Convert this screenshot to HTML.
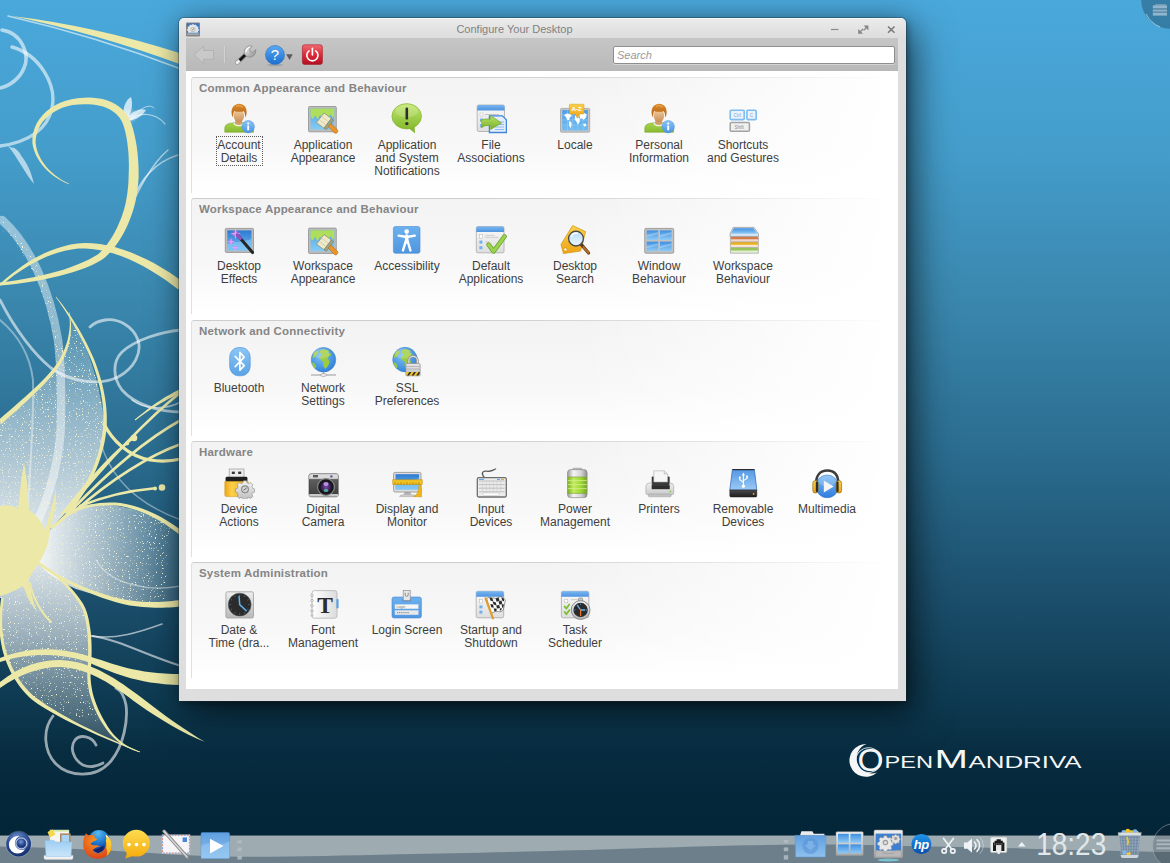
<!DOCTYPE html>
<html><head><meta charset="utf-8"><title>Configure Your Desktop</title>
<style>
html,body{margin:0;padding:0}
body{width:1170px;height:863px;overflow:hidden;position:relative;font-family:"Liberation Sans",sans-serif;font-size:11px;color:#3a3a3a;
background:linear-gradient(180deg,#4aa8db 0px,#449dcb 150px,#3a87ae 300px,#2b6d90 450px,#1b4e6b 600px,#0e3a51 700px,#072b3f 760px,#04273a 800px,#042437 863px)}
#wall{position:absolute;left:0;top:0;width:1170px;height:863px}
#win{position:absolute;left:179px;top:18px;width:727px;height:683px;background:linear-gradient(180deg,#fafafa 0,#eaeaea 1.500px,#dddddd 20px,#dedede 24px,#dedede 100%);border-radius:5px 5px 0 0;box-shadow:0 0 0 1px rgba(30,50,60,.35),2px 3px 6px rgba(0,0,0,.3),0 2px 24px rgba(0,0,0,.2),9px 12px 38px rgba(0,0,0,.55)}
#title{position:absolute;left:0;top:4px;width:671px;text-align:center;line-height:14px;color:#828282;font-size:11px}
#tb{position:absolute;left:7px;top:20px;width:712px;height:33.500px;background:linear-gradient(180deg,#c6c6c6,#b8b8b8)}
#search{position:absolute;left:434px;top:28px;width:280px;height:16px;background:#fff;border:1px solid #8e8e8e;border-radius:2px;box-shadow:0 1px 0 #d4d4d4}
#search span{position:absolute;left:3px;top:1px;font-style:italic;color:#9a9a9a;font-size:11px;line-height:14px}
#content{position:absolute;left:7px;top:53px;width:712px;height:618px;background:#fff}
.grp{position:absolute;left:5px;width:702px;height:116px;border-radius:3px 0 0 0;
background:linear-gradient(90deg,rgba(255,255,255,0) 55%,#fff 100%),linear-gradient(180deg,#f3f3f3 0,#f8f8f8 60%,#fff 100%)}
.grp:before{content:"";position:absolute;left:0;top:0;right:0;bottom:0;border-top:1px solid #cdcdcd;border-left:1px solid #e0e0e0;border-radius:3px 0 0 0;
-webkit-mask-image:linear-gradient(90deg,#000 40%,transparent 100%)}
.grp h3{position:absolute;left:8px;top:4px;margin:0;font-size:11.5px;letter-spacing:.2px;line-height:14px;font-weight:bold;color:#858585;white-space:nowrap}
.it{position:absolute;top:26px;width:84px;text-align:center;line-height:13px;font-size:12px;letter-spacing:0;color:#3e3e3e;white-space:nowrap}
.it i{font-style:normal;display:block;width:32px;height:32px;margin:0 auto 4px}
.foc{position:absolute;left:18.5px;top:33px;width:47px;height:29.500px;border:1px dotted #5a5a5a;box-sizing:border-box}
#panel{position:absolute;left:0;top:835px;width:1170px;height:28px;background:linear-gradient(180deg,#97a8b0 0,#93a4ad 12px,#6f838e 14px,#6d808b 100%)}
</style></head><body>
<svg id="wall" viewBox="0 0 1170 863">
<defs>
<linearGradient id="gSail" x1="0" y1="0" x2="0" y2="1"><stop offset="0" stop-color="#fff" stop-opacity=".1"/><stop offset=".45" stop-color="#fff" stop-opacity=".48"/><stop offset="1" stop-color="#fff" stop-opacity=".9"/></linearGradient>
<linearGradient id="gPet2" x1="0" y1="0" x2="1" y2="0"><stop offset="0" stop-color="#fff" stop-opacity=".95"/><stop offset=".45" stop-color="#fff" stop-opacity=".6"/><stop offset="1" stop-color="#fff" stop-opacity=".1"/></linearGradient>
<linearGradient id="gPet3" x1="0" y1="0" x2="0" y2="1"><stop offset="0" stop-color="#fff" stop-opacity=".85"/><stop offset=".6" stop-color="#fff" stop-opacity=".42"/><stop offset="1" stop-color="#fff" stop-opacity=".12"/></linearGradient>
<radialGradient id="gGlow" cx=".5" cy=".5" r=".5"><stop offset="0" stop-color="#fff" stop-opacity=".55"/><stop offset="1" stop-color="#fff" stop-opacity="0"/></radialGradient>
<filter id="spk" x="0" y="0" width="100%" height="100%" filterUnits="objectBoundingBox"><feTurbulence type="fractalNoise" baseFrequency="0.85" numOctaves="1" seed="7" result="n"/><feColorMatrix in="n" type="matrix" values="0 0 0 0 0.925  0 0 0 0 0.914  0 0 0 0 0.66  0 0 0 11 -7.1" result="d"/><feComposite in="d" in2="SourceGraphic" operator="in"/></filter>
</defs>
<g fill="none" stroke="#fff" stroke-opacity=".58" stroke-linecap="round">
<path d="M8,16 Q95,36 181,69" stroke-width="1.6"/>
<path d="M2,30 C22,33 30,55 24,68 C20,78 10,86 0,88" stroke-width="3.6"/>
<path d="M12,47 C40,55 57,85 52,108 C48,128 30,142 0,146" stroke-width="3.4"/>
<path d="M2,220 C30,245 50,290 58,340 C62,370 61,400 61,420 C61,450 52,490 38,520" stroke-width="8.5" stroke-opacity=".45"/>
<path d="M0,300 C15,330 35,355 51,368 C70,382 100,386 118,377 C135,368 142,352 138,340 C133,326 118,318 105,320 C98,321 93,324 90,327" stroke-width="2.8"/>
<path d="M181,330 C160,332 135,340 122,352 C112,362 113,378 122,390 C135,405 160,412 181,412" stroke-width="2.8"/>
<path d="M0,320 C18,335 30,355 33,380 C34,420 30,470 28,505" stroke-width="2" stroke-opacity=".4"/>
<path d="M133,200 C140,180 155,162 178,155" stroke-width="1.6"/>
<path d="M122,228 C135,195 150,165 168,150" stroke-width="1.6"/>
<path d="M130,120 C140,112 155,112 165,124" stroke-width="1.2"/>
<path d="M132,118 C142,106 150,104 154,108" stroke-width="1"/>
<path d="M92,636 C115,640 140,632 162,624" stroke-width="1.6"/>
<path d="M92,636 C120,640 145,655 181,666" stroke-width="2.2"/>
<path d="M53,716 C42,730 44,752 56,764 C68,776 95,780 111,761 C124,745 128,720 126,705 C124,695 120,690 116,688" stroke-width="2.8"/>
<path d="M96,745 C92,736 80,734 75,740 C69,748 74,760 83,765 C90,768 98,766 103,763" stroke-width="2.8"/>
<path d="M132,400 C145,410 165,410 181,402" stroke-width="1.5"/>
<path d="M96,560 C110,585 150,592 181,586" stroke-width="1.4" stroke-opacity=".45"/>
<path d="M100,440 C110,480 140,505 181,520" stroke-width="1.4" stroke-opacity=".4"/>
</g>
<path d="M8,146 C20,150 30,165 34,184 C24,172 18,158 8,146Z M12,147 C20,150 24,158 22,167 C20,158 17,152 12,147Z" fill="#fff" fill-opacity=".6"/>
<path d="M124,116 C122,108 126,100 131,97 C133,104 132,110 129,116 C134,110 141,108 146,110 C142,117 134,121 126,121Z" fill="#fff" fill-opacity=".7"/>
<circle cx="129" cy="116" r="9" fill="url(#gGlow)"/>
<path d="M0,422 C25,400 48,380 58,365 C68,350 73,330 69,312 C85,340 100,380 105,426 C103,450 95,475 76,502 L51,528 L20,545 L0,520Z" fill="url(#gSail)"/>
<path d="M50,530 C60,518 70,509 80,506 C110,500 150,510 181,533 L181,604 C150,606 110,600 76,589 C60,582 45,572 38,563Z" fill="url(#gPet2)"/>
<path d="M0,598 L2,560 L33,560 C50,568 75,590 84,609 C90,625 91,650 89,672 C88,690 95,712 110,732 C120,744 130,749 140,752 C105,740 65,722 33,698 C15,683 5,660 2,640 C0,625 0,610 2,598Z" fill="url(#gPet3)"/>
<g filter="url(#spk)" fill="#000">
<path d="M0,422 C25,400 48,380 58,365 C68,350 73,330 69,312 C85,340 100,380 105,426 C103,450 95,475 76,502 L51,528 L20,545 L0,520Z"/>
<path d="M50,530 C60,518 70,509 80,506 C110,500 150,510 170,526 L165,600 C150,606 110,600 76,589 C60,582 45,572 38,563Z"/>
<path d="M0,598 L2,560 L33,560 C50,568 75,590 84,609 C90,625 91,650 89,672 C88,690 95,712 100,722 C85,720 65,712 33,698 C15,683 5,660 2,640 C0,625 0,610 2,598Z"/>
<path d="M-2,216 C30,242 54,290 62,340 C66,370 65,400 65,420 L57,420 C57,400 58,370 54,340 C46,292 26,250 -2,226Z"/>
</g>
<g fill="none" stroke="#ece9a8" stroke-linecap="round" stroke-linejoin="round">
<path d="M66,512 C100,470 140,425 181,392" stroke-width="2.6"/>
<path d="M70,512 C105,475 145,440 181,420" stroke-width="2.6"/>
<path d="M62,514 C85,485 110,455 132,439" stroke-width="2.2"/>
<path d="M74,512 C110,480 150,455 181,444" stroke-width="2.8"/>
<path d="M104,424 C112,440 128,456 150,460 C162,462 172,461 181,459" stroke-width="3.2"/>
<path d="M80,506 C100,498 125,491 153,488.5" stroke-width="2.6"/>
<path d="M30,583 C32,595 40,612 51,622" stroke-width="2"/>
</g>
<g fill="#ece9a8">
<path d="M69.1,183.7 L65.2,181.8 L61.4,179.7 L57.9,177.3 L54.5,174.8 L51.4,172.1 L48.5,169.2 L45.9,166.2 L43.5,163.1 L41.4,159.9 L39.6,156.6 L38.1,153.2 L36.9,149.8 L36.1,146.3 L35.6,142.9 L35.8,138.3 L36.7,133.9 L38.2,129.6 L40.2,125.6 L42.7,121.8 L45.8,118.4 L49.3,115.2 L53.2,112.4 L57.6,109.9 L62.3,107.8 L67.3,106.2 L72.6,105.1 L78.2,104.4 L84.1,104.3 L88.4,104.2 L92.4,104.5 L96.1,105.0 L99.7,105.7 L103.0,106.6 L106.1,107.7 L109.0,109.0 L111.6,110.5 L114.0,112.2 L116.2,114.0 L118.1,116.0 L119.8,118.1 L121.2,120.3 L122.4,122.6 L123.8,126.6 L125.1,131.1 L126.2,136.1 L127.1,141.3 L127.8,146.9 L128.4,152.6 L128.7,158.5 L128.9,164.5 L128.8,170.6 L128.6,176.5 L128.4,182.4 L127.9,188.2 L127.3,193.8 L126.4,199.1 L125.4,204.2 L124.1,209.3 L122.5,214.2 L120.8,219.0 L118.8,223.7 L116.8,228.2 L114.6,232.5 L112.3,236.5 L109.9,240.3 L107.5,243.8 L105.1,247.0 L102.7,249.8 L100.3,252.2 L98.1,254.2 L93.8,256.8 L88.9,259.5 L83.4,262.1 L77.4,264.6 L71.0,267.1 L64.1,269.4 L56.9,271.5 L49.3,273.6 L41.5,275.4 L33.4,277.2 L25.2,278.8 L16.8,280.2 L8.4,281.4 L-0.2,282.5 L0.2,285.5 L8.8,284.7 L17.3,283.7 L25.8,282.5 L34.2,281.2 L42.4,279.7 L50.4,278.0 L58.1,276.2 L65.6,274.3 L72.7,272.2 L79.4,270.0 L85.8,267.7 L91.6,265.2 L97.0,262.6 L101.9,259.8 L104.9,257.5 L107.8,254.8 L110.7,251.8 L113.5,248.4 L116.3,244.8 L119.1,240.8 L121.7,236.5 L124.2,232.0 L126.6,227.2 L128.8,222.3 L130.8,217.1 L132.6,211.9 L134.2,206.4 L135.6,200.9 L136.6,195.2 L137.5,189.3 L138.2,183.2 L138.6,176.9 L138.6,170.6 L138.4,164.3 L138.0,158.0 L137.4,151.8 L136.6,145.7 L135.6,139.9 L134.4,134.3 L133.1,129.0 L131.5,124.0 L129.6,119.4 L128.0,116.3 L126.0,113.4 L123.8,110.8 L121.3,108.4 L118.5,106.2 L115.5,104.2 L112.2,102.5 L108.8,101.0 L105.1,99.8 L101.2,98.8 L97.1,98.2 L92.9,97.7 L88.4,97.6 L83.9,97.7 L77.6,98.2 L71.5,99.2 L65.7,100.7 L60.2,102.8 L55.1,105.3 L50.4,108.2 L46.2,111.6 L42.5,115.3 L39.3,119.3 L36.6,123.6 L34.6,128.2 L33.2,133.0 L32.4,138.0 L32.4,143.1 L33.1,147.0 L34.2,150.6 L35.6,154.2 L37.4,157.7 L39.4,161.1 L41.8,164.4 L44.4,167.5 L47.2,170.5 L50.3,173.3 L53.7,175.9 L57.2,178.3 L60.9,180.5 L64.8,182.5 L68.9,184.3Z"/>
<path d="M0.6,285.8 L5.1,282.2 L9.6,278.7 L14.4,275.1 L19.3,271.7 L24.3,268.4 L29.6,265.2 L35.0,262.2 L40.6,259.4 L46.4,256.8 L52.4,254.5 L58.5,252.5 L64.9,250.8 L71.5,249.5 L78.3,248.6 L85.0,248.4 L91.9,248.9 L99.0,249.9 L106.3,251.5 L113.7,253.5 L121.1,256.1 L128.5,259.1 L136.0,262.5 L143.4,266.3 L150.7,270.5 L157.9,274.9 L164.9,279.6 L171.7,284.5 L178.3,289.6 L183.7,282.4 L176.8,277.4 L169.6,272.6 L162.1,268.0 L154.6,263.6 L146.9,259.6 L139.1,255.9 L131.2,252.6 L123.3,249.7 L115.5,247.3 L107.7,245.4 L100.0,244.0 L92.4,243.2 L85.0,242.9 L77.7,243.4 L70.6,244.6 L63.8,246.2 L57.2,248.2 L50.9,250.5 L44.8,253.1 L38.9,256.0 L33.3,259.1 L27.8,262.3 L22.6,265.8 L17.6,269.4 L12.8,273.0 L8.1,276.7 L3.7,280.5 L-0.6,284.2Z"/>
<path d="M55.8,297.2 L58.7,301.2 L61.6,305.4 L64.5,309.8 L67.4,314.4 L70.3,319.0 L73.1,323.8 L75.8,328.7 L78.6,333.7 L81.2,338.6 L83.8,343.6 L86.2,348.6 L88.5,353.6 L90.7,358.6 L92.7,363.5 L94.3,368.2 L95.8,372.8 L97.1,377.3 L98.4,381.8 L99.5,386.3 L100.5,390.7 L101.3,395.2 L102.0,399.6 L102.6,403.9 L103.0,408.3 L103.3,412.7 L103.4,417.1 L103.4,421.5 L103.3,425.9 L102.7,431.0 L102.0,436.1 L101.1,441.2 L100.0,446.4 L98.6,451.7 L97.1,457.0 L95.2,462.3 L93.2,467.7 L90.8,473.1 L88.2,478.6 L85.3,484.1 L82.1,489.7 L78.5,495.4 L74.7,501.1 L73.0,503.8 L71.3,506.3 L69.6,508.6 L67.9,510.8 L66.2,512.8 L64.5,514.7 L62.8,516.5 L61.0,518.2 L59.3,519.8 L57.5,521.3 L55.7,522.8 L53.9,524.1 L52.1,525.5 L50.2,526.8 L51.8,529.2 L53.8,527.9 L55.7,526.6 L57.6,525.2 L59.5,523.7 L61.3,522.1 L63.2,520.5 L65.0,518.7 L66.8,516.9 L68.6,514.9 L70.3,512.8 L72.1,510.5 L73.9,508.1 L75.6,505.6 L77.3,502.9 L81.3,497.1 L84.9,491.4 L88.2,485.7 L91.2,480.1 L93.9,474.5 L96.3,469.0 L98.5,463.5 L100.4,458.0 L102.0,452.6 L103.4,447.3 L104.6,441.9 L105.5,436.6 L106.2,431.4 L106.7,426.1 L106.8,421.5 L106.8,417.0 L106.6,412.5 L106.3,408.0 L105.8,403.6 L105.2,399.1 L104.4,394.6 L103.5,390.1 L102.5,385.6 L101.3,381.0 L100.0,376.5 L98.6,371.9 L97.0,367.2 L95.3,362.5 L93.3,357.5 L91.0,352.5 L88.7,347.4 L86.2,342.4 L83.5,337.4 L80.8,332.4 L77.9,327.5 L74.9,322.7 L71.8,318.1 L68.7,313.5 L65.6,309.1 L62.5,304.8 L59.3,300.7 L56.2,296.8Z"/>
<path d="M68.8,312.0 L69.4,315.9 L69.7,319.9 L69.8,323.8 L69.6,327.7 L69.2,331.6 L68.5,335.5 L67.7,339.4 L66.6,343.2 L65.3,346.9 L63.9,350.5 L62.3,354.1 L60.6,357.6 L58.7,360.9 L56.6,364.1 L54.3,367.3 L51.6,370.6 L48.6,374.1 L45.2,377.8 L41.5,381.5 L37.5,385.4 L33.2,389.4 L28.8,393.5 L24.1,397.7 L19.2,402.1 L14.2,406.5 L9.0,410.9 L3.7,415.5 L-1.7,420.1 L1.7,423.9 L6.9,419.1 L12.1,414.5 L17.2,409.9 L22.2,405.3 L27.0,400.9 L31.6,396.6 L36.0,392.3 L40.2,388.2 L44.2,384.2 L47.8,380.3 L51.2,376.5 L54.3,372.8 L57.0,369.3 L59.4,365.9 L61.5,362.5 L63.4,359.0 L65.1,355.4 L66.6,351.6 L67.9,347.8 L69.0,343.8 L69.8,339.9 L70.5,335.8 L70.9,331.8 L71.0,327.8 L71.0,323.8 L70.7,319.8 L70.1,315.8 L69.2,312.0Z"/>
<path d="M60.7,522.7 L63.0,520.2 L65.6,518.0 L68.4,515.9 L71.5,514.0 L74.8,512.2 L78.4,510.6 L82.3,509.3 L86.3,508.1 L90.6,507.1 L95.1,506.3 L99.8,505.8 L104.7,505.4 L109.7,505.3 L114.9,505.4 L120.1,506.1 L125.4,507.1 L130.6,508.4 L135.7,509.9 L140.8,511.8 L145.7,513.8 L150.6,516.1 L155.3,518.5 L159.9,521.0 L164.2,523.6 L168.4,526.4 L172.4,529.2 L176.1,532.0 L179.6,534.8 L182.4,531.2 L178.8,528.5 L174.9,525.7 L170.7,522.9 L166.4,520.2 L161.8,517.6 L157.1,515.1 L152.2,512.7 L147.1,510.5 L142.0,508.5 L136.7,506.8 L131.4,505.3 L126.0,504.0 L120.6,503.1 L115.1,502.6 L109.7,502.5 L104.5,502.7 L99.5,503.1 L94.7,503.7 L90.1,504.6 L85.7,505.7 L81.5,507.0 L77.5,508.5 L73.8,510.2 L70.3,512.1 L67.1,514.1 L64.2,516.4 L61.6,518.8 L59.3,521.3Z"/>
<path d="M37.4,563.8 L42.4,567.5 L47.8,571.3 L53.7,575.0 L60.0,578.7 L66.5,582.3 L73.3,585.7 L80.3,589.0 L87.5,592.1 L94.7,595.0 L101.9,597.7 L109.0,600.1 L116.1,602.2 L122.9,604.0 L129.6,605.4 L134.0,606.0 L138.3,606.6 L142.6,607.0 L146.8,607.3 L150.9,607.6 L155.0,607.7 L158.9,607.8 L162.7,607.7 L166.3,607.6 L169.8,607.5 L173.1,607.2 L176.1,606.9 L179.0,606.6 L181.5,606.2 L180.5,599.8 L178.0,600.2 L175.4,600.6 L172.5,601.0 L169.3,601.3 L166.0,601.6 L162.5,601.8 L158.8,602.0 L155.0,602.1 L151.1,602.1 L147.1,602.0 L143.0,601.8 L138.8,601.5 L134.6,601.1 L130.4,600.6 L123.9,599.5 L117.2,598.0 L110.2,596.2 L103.1,594.0 L96.0,591.6 L88.8,588.9 L81.7,586.0 L74.7,582.9 L67.8,579.7 L61.3,576.3 L55.0,572.8 L49.1,569.3 L43.6,565.8 L38.6,562.2Z"/>
<path d="M32.5,560.9 L36.3,562.8 L40.1,565.1 L44.2,567.8 L48.3,570.8 L52.4,574.1 L56.6,577.6 L60.6,581.3 L64.6,585.2 L68.3,589.2 L71.8,593.3 L75.1,597.4 L78.0,601.6 L80.5,605.7 L82.6,609.6 L83.7,613.0 L84.7,616.8 L85.6,620.7 L86.3,624.9 L86.9,629.3 L87.4,633.8 L87.8,638.4 L88.0,643.1 L88.2,647.9 L88.2,652.7 L88.2,657.5 L88.0,662.3 L87.7,667.1 L87.4,671.9 L87.3,675.9 L87.4,680.1 L87.9,684.3 L88.5,688.6 L89.4,692.9 L90.6,697.3 L92.0,701.8 L93.7,706.2 L95.6,710.7 L97.7,715.2 L100.1,719.7 L102.8,724.1 L105.8,728.5 L109.0,732.8 L111.3,735.2 L113.5,737.5 L115.8,739.5 L118.0,741.4 L120.2,743.1 L122.4,744.6 L124.6,746.0 L126.8,747.2 L129.0,748.3 L131.2,749.3 L133.4,750.2 L135.6,751.0 L137.7,751.7 L139.9,752.3 L140.1,751.7 L138.0,751.0 L135.9,750.2 L133.8,749.3 L131.6,748.3 L129.6,747.3 L127.5,746.1 L125.4,744.8 L123.3,743.3 L121.2,741.7 L119.2,740.0 L117.1,738.1 L115.0,736.0 L113.0,733.7 L111.0,731.2 L108.0,726.9 L105.3,722.5 L102.8,718.2 L100.5,713.8 L98.4,709.4 L96.6,705.1 L95.0,700.7 L93.6,696.4 L92.5,692.2 L91.7,688.0 L91.1,683.9 L90.7,679.8 L90.5,675.9 L90.6,672.1 L91.0,667.4 L91.3,662.5 L91.5,657.6 L91.6,652.7 L91.6,647.8 L91.5,642.9 L91.2,638.1 L90.9,633.4 L90.3,628.8 L89.6,624.4 L88.8,620.1 L87.9,616.0 L86.7,612.1 L85.4,608.4 L83.2,604.1 L80.5,599.9 L77.4,595.7 L74.0,591.5 L70.3,587.3 L66.4,583.3 L62.4,579.4 L58.2,575.7 L53.9,572.2 L49.7,569.0 L45.4,566.0 L41.3,563.3 L37.3,561.0 L33.5,559.1Z"/>
<path d="M1.3,597.8 L0.7,601.5 L0.3,605.0 L-0.1,608.6 L-0.4,612.0 L-0.6,615.5 L-0.7,618.9 L-0.7,622.3 L-0.7,625.6 L-0.5,628.9 L-0.3,632.2 L-0.0,635.5 L0.4,638.8 L0.9,642.0 L1.5,645.3 L2.4,649.7 L3.6,654.0 L5.0,658.3 L6.5,662.6 L8.3,666.8 L10.2,670.9 L12.3,675.0 L14.6,678.9 L17.1,682.7 L19.7,686.4 L22.5,690.0 L25.4,693.3 L28.5,696.5 L31.8,699.5 L37.9,703.9 L44.3,708.0 L51.1,712.1 L58.2,716.1 L65.6,720.0 L73.2,723.8 L81.1,727.6 L89.1,731.3 L97.3,735.0 L105.7,738.6 L114.1,742.1 L122.7,745.6 L131.3,748.9 L139.9,752.3 L140.1,751.7 L131.6,748.1 L123.1,744.5 L114.7,740.8 L106.4,737.0 L98.1,733.2 L90.1,729.3 L82.2,725.4 L74.5,721.4 L67.0,717.3 L59.8,713.2 L52.9,709.1 L46.3,704.9 L40.1,700.6 L34.2,696.5 L31.2,693.7 L28.2,690.7 L25.4,687.5 L22.7,684.2 L20.1,680.7 L17.7,677.0 L15.4,673.3 L13.3,669.4 L11.4,665.4 L9.6,661.4 L8.1,657.2 L6.7,653.1 L5.5,648.9 L4.5,644.7 L3.9,641.5 L3.4,638.4 L3.0,635.2 L2.6,632.0 L2.4,628.7 L2.2,625.5 L2.1,622.2 L2.1,618.9 L2.2,615.6 L2.3,612.2 L2.6,608.8 L2.9,605.3 L3.3,601.8 L3.7,598.2Z"/>
<path d="M135.3,420.4 L138.6,417.9 L141.9,415.6 L145.1,413.2 L148.4,411.0 L151.7,408.8 L155.0,406.7 L158.3,404.7 L161.6,402.7 L164.9,400.9 L168.3,399.1 L171.6,397.4 L175.0,395.8 L178.4,394.3 L181.8,392.8 L180.2,389.2 L176.8,390.8 L173.4,392.6 L170.1,394.4 L166.7,396.3 L163.4,398.3 L160.2,400.4 L156.9,402.6 L153.7,404.8 L150.5,407.1 L147.3,409.5 L144.2,411.9 L141.0,414.4 L137.8,417.0 L134.7,419.6Z"/>
<path d="M12,16 Q95,26 181,53.500 L181,64.500 Q95,33 12,16Z"/>
<path d="M0,682 C20,666 40,660 60,660 C92,661 118,680 142,698 C165,716 185,730 205,742 C183,733 162,721 138,704 C114,686 90,668 60,667 C40,667 20,674 0,688Z"/>
<path d="M0,658 C25,648 55,646 85,655 C115,664 135,674 181,674 L181,685 C135,684 112,672 85,661 C55,652 25,654 0,662Z"/>
<path d="M0,506 C8,504 14,506 18,509 L21,482 L24,462 L27,482 L29,510 C36,514 42,522 45,531 L52,506 L56,488 L55.500,507 L49,536 C48,546 44,556 38,564 C34,570 30,576 28,581 L32,596 L36,611 L29,600 L23,586 C16,590 8,594 0,596Z"/>
<circle cx="134" cy="438" r="3.3"/><circle cx="127" cy="443.500" r="2.100"/>
<circle cx="162" cy="487.500" r="3.300"/><circle cx="155" cy="488.500" r="2.100"/>
</g>
</svg>
<svg width="0" height="0" style="position:absolute"><defs>
<linearGradient id="gGreen" x1="0" y1="0" x2="0" y2="1"><stop offset="0" stop-color="#a8d44c"/><stop offset="1" stop-color="#88ba30"/></linearGradient>
<linearGradient id="gInfo" x1="0" y1="0" x2="0" y2="1"><stop offset="0" stop-color="#8cc6f6"/><stop offset="1" stop-color="#4a92e6"/></linearGradient>
<linearGradient id="gGreen2" x1="0" y1="0" x2="0" y2="1"><stop offset="0" stop-color="#b8e468"/><stop offset="1" stop-color="#78b028"/></linearGradient>
<linearGradient id="gSkin" x1="0" y1="0" x2="0" y2="1"><stop offset="0" stop-color="#f4d0a0"/><stop offset="1" stop-color="#c98f58"/></linearGradient>
<linearGradient id="gHair" x1="0" y1="0" x2="0" y2="1"><stop offset="0" stop-color="#dc8c2c"/><stop offset="1" stop-color="#b05e16"/></linearGradient>
<linearGradient id="gBlueB" x1="0" y1="0" x2="0" y2="1"><stop offset="0" stop-color="#7dbdf4"/><stop offset="1" stop-color="#2f7be0"/></linearGradient>
<linearGradient id="gSky" x1="0" y1="0" x2="0" y2="1"><stop offset="0" stop-color="#4aa4e6"/><stop offset="1" stop-color="#86ccf4"/></linearGradient>
<linearGradient id="gSky2" x1="0" y1="0" x2="0" y2="1"><stop offset="0" stop-color="#4c9fe8"/><stop offset="1" stop-color="#74bdf2"/></linearGradient>
<linearGradient id="gFx" x1="0" y1="0" x2="0" y2="1"><stop offset="0" stop-color="#2f7ad2"/><stop offset="1" stop-color="#6cbcf2"/></linearGradient>
<linearGradient id="gAcc" x1="0" y1="0" x2="0" y2="1"><stop offset="0" stop-color="#6cb0ee"/><stop offset="1" stop-color="#4f96e0"/></linearGradient>
<linearGradient id="gBt" x1="0" y1="0" x2="0" y2="1"><stop offset="0" stop-color="#8cc6f4"/><stop offset="1" stop-color="#5aa2e6"/></linearGradient>
<linearGradient id="gPane" x1="0" y1="0" x2="0" y2="1"><stop offset="0" stop-color="#3f90e2"/><stop offset="1" stop-color="#8fcaf4"/></linearGradient>
<linearGradient id="gBubble" x1="0" y1="0" x2="0" y2="1"><stop offset="0" stop-color="#bfe66a"/><stop offset="1" stop-color="#86ba30"/></linearGradient>
<linearGradient id="gTitle" x1="0" y1="0" x2="0" y2="1"><stop offset="0" stop-color="#78b6f0"/><stop offset="1" stop-color="#4e94e0"/></linearGradient>
<linearGradient id="gWinBody" x1="0" y1="0" x2="0" y2="1"><stop offset="0" stop-color="#fafafa"/><stop offset="1" stop-color="#dedede"/></linearGradient>
<linearGradient id="gTag" x1="0" y1="0" x2="0" y2="1"><stop offset="0" stop-color="#fad048"/><stop offset="1" stop-color="#eea416"/></linearGradient>
<linearGradient id="gUsbY" x1="0" y1="0" x2="1" y2="0"><stop offset="0" stop-color="#eca818"/><stop offset=".3" stop-color="#fcd048"/><stop offset="1" stop-color="#eeac1a"/></linearGradient>
<linearGradient id="gGlass" x1="0" y1="0" x2="0" y2="1"><stop offset="0" stop-color="#b6dcfa"/><stop offset="1" stop-color="#eef6fd"/></linearGradient>
<linearGradient id="gSilver" x1="0" y1="0" x2="0" y2="1"><stop offset="0" stop-color="#eeeeee"/><stop offset="1" stop-color="#b8b8b8"/></linearGradient>
<linearGradient id="gGear" x1="0" y1="0" x2="0" y2="1"><stop offset="0" stop-color="#f4f4f4"/><stop offset="1" stop-color="#bcbcbc"/></linearGradient>
<linearGradient id="gCam" x1="0" y1="0" x2="0" y2="1"><stop offset="0" stop-color="#6a6a6a"/><stop offset="1" stop-color="#3c3c3c"/></linearGradient>
<radialGradient id="gLens" cx=".5" cy=".5" r=".5"><stop offset="0" stop-color="#7a4ab0"/><stop offset="1" stop-color="#241838"/></radialGradient>
<radialGradient id="gGlobe" cx=".4" cy=".35" r=".7"><stop offset="0" stop-color="#7cc0f4"/><stop offset="1" stop-color="#2f80d6"/></radialGradient>
<linearGradient id="gBatS" x1="0" y1="0" x2="1" y2="0"><stop offset="0" stop-color="#9c9c9c"/><stop offset=".3" stop-color="#f4f4f4"/><stop offset=".7" stop-color="#d4d4d4"/><stop offset="1" stop-color="#8e8e8e"/></linearGradient>
<linearGradient id="gBatG" x1="0" y1="0" x2="1" y2="0"><stop offset="0" stop-color="#7cb424"/><stop offset=".3" stop-color="#c2ec5e"/><stop offset=".7" stop-color="#9cd636"/><stop offset="1" stop-color="#74a820"/></linearGradient>
<linearGradient id="gPrn" x1="0" y1="0" x2="0" y2="1"><stop offset="0" stop-color="#f0f0f0"/><stop offset="1" stop-color="#cacaca"/></linearGradient>
<linearGradient id="gDrive" x1="0" y1="0" x2="0" y2="1"><stop offset="0" stop-color="#5498e6"/><stop offset="1" stop-color="#9acaf4"/></linearGradient>
<linearGradient id="gDark" x1="0" y1="0" x2="0" y2="1"><stop offset="0" stop-color="#4a4a4a"/><stop offset="1" stop-color="#1e1e1e"/></linearGradient>
<linearGradient id="gPaper" x1="0" y1="0" x2="1" y2="0"><stop offset="0" stop-color="#ffffff"/><stop offset="1" stop-color="#dcdcdc"/></linearGradient>
</defs></svg>
<div id="win">
 <div id="title">Configure Your Desktop</div>
 <div id="tb"></div>
 <div id="search"><span>Search</span></div>
<svg id="chrome" width="727" height="60" viewBox="179 18 727 60" style="position:absolute;left:0;top:0">
<defs>
<linearGradient id="cHelp" x1="0" y1="0" x2="0" y2="1"><stop offset="0" stop-color="#5aa9f0"/><stop offset="1" stop-color="#1c6fd0"/></linearGradient>
<linearGradient id="cPow" x1="0" y1="0" x2="0" y2="1"><stop offset="0" stop-color="#f06a70"/><stop offset=".5" stop-color="#dc2c3a"/><stop offset="1" stop-color="#b01224"/></linearGradient>
<linearGradient id="cWr" x1="0" y1="0" x2="1" y2="1"><stop offset="0" stop-color="#f4f4f4"/><stop offset="1" stop-color="#8c8c8c"/></linearGradient>
</defs>
<!-- title icon -->
<rect x="186" y="22.400" width="14" height="14" rx="1" fill="#858585"/>
<rect x="187" y="23.400" width="12" height="10.400" fill="#3b74b8"/>
<rect x="187" y="33.600" width="12" height=".8" fill="#d8d8d8"/>
<path d="M193,23.800 l1.300,1.200 1.800,-.6 .6,1.800 1.800,.5 -.4,1.900 1.200,1.400 -1.300,1.300 .2,1.500 h-10.400 l.2,-1.500 -1.300,-1.300 1.200,-1.400 -.4,-1.900 1.800,-.5 .6,-1.800 1.800,.6z" fill="#e4e4e4"/>
<circle cx="193" cy="29.400" r="2.500" fill="#bdbdbd"/><circle cx="193" cy="29.400" r="1.600" fill="#e8e8e8"/><path d="M192,30.300 l2.200,-1.900" stroke="#7d7d7d" stroke-width=".9"/>
<!-- window buttons -->
<path d="M831,29.5 h7.5" stroke="#8a8a8a" stroke-width="1.2"/>
<path d="M863.600,25.600 h4.800 v4.800z M863,33.800 h-4.800 v-4.800z" fill="#858585"/><path d="M867,27 l-3.400,3.400 M859.600,32.400 l3.400,-3.400" stroke="#858585" stroke-width="1.300" fill="none"/>
<path d="M888,26.5 l6.5,6.3 M894.5,26.5 l-6.5,6.3" stroke="#777" stroke-width="1.5"/>
<!-- back arrow -->
<path d="M194,54.8 L203.5,46 V50.5 H213.5 V59.2 H203.5 V63.6 Z" fill="#c9c9c9" stroke="#b2b2b2" stroke-width="1" stroke-linejoin="round"/>
<path d="M224.5,46 V63" stroke="#d2d2d2" stroke-width="1"/><path d="M225.5,46 V63" stroke="#b4b4b4" stroke-width="1" opacity=".6"/>
<!-- wrench -->
<path d="M237.200,62.600 L246.200,54" stroke="#8c8c8c" stroke-width="4.400" stroke-linecap="round"/>
<path d="M237.200,62.600 L246.200,54" stroke="#e4e4e4" stroke-width="3.200" stroke-linecap="round"/>
<path d="M239.600,60.300 L246,54.200" stroke="#141414" stroke-width="3" stroke-linecap="butt"/>
<circle cx="237.400" cy="62.400" r="1" fill="#fff"/>
<path d="M244.600,54.600 C243.400,51.400 245,47.800 248,46.400 C249.600,45.700 251,45.600 252.200,46 L249.600,49 L250.400,51.800 L253,52.400 L255.600,49.600 C256.300,52.400 255,55.400 252.200,56.600 C250.400,57.400 248.400,57.200 247,56.600Z" fill="url(#cWr)" stroke="#7a7a7a" stroke-width=".6"/>
<path d="M246,51.500 C246.400,49.400 247.600,47.900 249.400,47.200" stroke="#fff" stroke-width="1.200" fill="none" stroke-linecap="round"/>
<!-- help -->
<ellipse cx="275" cy="65" rx="8" ry="1.5" fill="#000" opacity=".12"/>
<circle cx="275" cy="55" r="9.5" fill="url(#cHelp)" stroke="#2a6fc4" stroke-width=".6"/>
<text x="275" y="60.2" font-family="Liberation Sans, sans-serif" font-size="15" fill="#fff" text-anchor="middle">?</text>
<path d="M286.2,54.3 h6.6 l-3.3,5.6z" fill="#5c5c5c"/>
<!-- power -->
<rect x="302.4" y="44.8" width="20" height="19.6" rx="2.2" fill="url(#cPow)" stroke="#a81828" stroke-width=".6"/>
<path d="M309,50.8 A5.6,5.6 0 1 0 315.8,50.8" fill="none" stroke="#fff" stroke-width="1.600" stroke-linecap="round"/>
<path d="M312.4,48.2 V55" stroke="#fff" stroke-width="1.600" stroke-linecap="round"/>
</svg>
 <div id="content">
  <div class="grp" style="top:6px"><h3>Common Appearance and Behaviour</h3>
   <div class="it" style="left:6px"><b class="foc"></b><i><svg width="32" height="32" viewBox="0 0 32 32"><path d="M1.8,29.2 V25.4 C1.8,22.2 4,20.8 8,20.2 L12,19.7 h7.400 L24,20.200 C28.200,20.800 30.600,22.200 30.600,25.400 V29.200Z" fill="url(#gGreen)" stroke="#7aa62c" stroke-width=".6" stroke-linejoin="round"/><path d="M12.300,15.500 h6.800 v4.800 c-1,2.500 -5.800,2.500 -6.800,0z" fill="#d39c66"/><path d="M10.800,20 C12.200,23.600 19.400,23.600 20.600,20" fill="none" stroke="#f2f1e8" stroke-width="1.300"/><ellipse cx="15.900" cy="12.600" rx="5.300" ry="6.600" fill="url(#gSkin)"/><path d="M9.700,14.400 C7.600,10 8,3.400 13,1.400 C18,-.4 23.800,2.400 23.600,9 C23.600,11 23.200,13 22.400,14.400 C22.300,11.600 21.700,9.500 20.700,8.300 C18.400,9 14,9.100 11.400,7.900 C10.400,9.500 9.900,11.800 9.700,14.400Z" fill="url(#gHair)"/><path d="M13,3.400 C15,2.400 18,2.600 19.600,4.400" stroke="#f0b050" stroke-width="1.200" fill="none" opacity=".7"/><circle cx="25.200" cy="23.700" r="6.200" fill="url(#gInfo)" stroke="#4a90de" stroke-width=".5"/><circle cx="25.200" cy="20.600" r="1.050" fill="#fff"/><rect x="24.250" y="22.500" width="1.900" height="4.800" fill="#fff"/></svg></i>Account<br>Details</div>
   <div class="it" style="left:90px"><i><svg width="32" height="32" viewBox="0 0 32 32"><g transform="translate(0,0)"><rect x="1.5" y="3.5" width="27.8" height="25.3" rx="1" fill="#bdbdbd" stroke="#8f8f8f" stroke-width=".8"/><rect x="3.6" y="5.6" width="23.6" height="21" fill="url(#gSky)"/><path d="M3.6,5.6 h23.6 v7.2 c-.8,2.4 -2,2.4 -2.6,0 c-.6,-1.6 -1.6,-1.2 -2.2,.6 c-.8,2.8 -2.2,2.6 -2.8,0 c-.6,-2 -1.8,-1.6 -2.4,.4 c-.8,3.4 -2.4,3.2 -3,0 c-.4,-1.8 -1.6,-1.6 -2.2,.2 c-.8,2.6 -2.2,2.4 -2.8,-.2 c-.6,-1.8 -1.6,-1.4 -2.2,.4 c-.6,2.2 -2.4,2 -3.4,-1.4z" fill="#aede5c"/><path d="M9.5,19.5 L17,10 L24.4,15.4 L17,25.2Z" fill="#efe9cc" stroke="#8f8a60" stroke-width=".7"/><path d="M12.5,17 l6,4.6 M14.8,13.6 l6,4.6" stroke="#cfc79c" stroke-width=".8"/><path d="M17,25.2 L24.4,15.4 L26.4,17.2 L19.4,26.8Z" fill="#a0a684" stroke="#70745a" stroke-width=".5"/><path d="M21.2,23.4 L23.8,20.4 L30.6,27 C31.6,29.4 29,31.2 27.2,29.8Z" fill="#ea952c" stroke="#b26810" stroke-width=".6"/></g></svg></i>Application<br>Appearance</div>
   <div class="it" style="left:174px"><i><svg width="32" height="32" viewBox="0 0 32 32"><path d="M17,24.6 L24,30.4 L23.6,23Z" fill="#86b832"/><ellipse cx="15.7" cy="13.3" rx="14.8" ry="12.7" fill="url(#gBubble)" stroke="#7fae30" stroke-width=".6"/><ellipse cx="15.7" cy="8" rx="11.5" ry="6.5" fill="#fff" opacity=".18"/><rect x="14.5" y="4.6" width="2.6" height="12" rx="1.2" fill="#2e2e2e"/><circle cx="15.8" cy="20.6" r="1.7" fill="#2e2e2e"/></svg></i>Application<br>and System<br>Notifications</div>
   <div class="it" style="left:258px"><i><svg width="32" height="32" viewBox="0 0 32 32"><rect x="2.2" y="2" width="27.3" height="26.5" rx="1.6" fill="url(#gWinBody)" stroke="#a9a9a9" stroke-width=".8"/><path d="M2.2,7.4 v-3.8 a1.6,1.6 0 0 1 1.6,-1.6 h24.1 a1.6,1.6 0 0 1 1.6,1.6 v3.8z" fill="url(#gTitle)"/><rect x="5" y="10" width="3" height="3" fill="#fff" stroke="#bbb" stroke-width=".5"/><rect x="5" y="15.5" width="3" height="3" fill="#7ab4ee"/><rect x="5" y="21" width="3" height="3" fill="#7ab4ee"/><path d="M10,11.5 h14 M10,17 h6" stroke="#c4c4c4" stroke-width="1"/><path d="M14.4,12.9 h13 l4,4 v12.6 h-17z" fill="#e4eefa" stroke="#3f86da" stroke-width="1.3"/><path d="M20,19 h9 M20,21.5 h9 M20,24 h9 M20,26.5 h9" stroke="#8cbcf0" stroke-width="1"/><path d="M5.6,17.4 C9,15.6 12,15.8 15.6,16.2 V12.6 L26.6,20 L15.6,26.4 V22.6 C12,22 9,22.6 6,25 C7.6,22 7.4,20 5.6,17.4Z" fill="url(#gGreen2)" stroke="#6c9c24" stroke-width=".6"/></svg></i>File<br>Associations</div>
   <div class="it" style="left:342px"><i><svg width="32" height="32" viewBox="0 0 32 32"><rect x="1.5" y="5.4" width="29.2" height="23.8" rx="1" fill="#c6c6c6" stroke="#9c9c9c" stroke-width=".7"/><rect x="3.2" y="7.1" width="25.8" height="20.4" fill="url(#gSky2)"/><path d="M3.2,12 h25.8 M3.2,17 h25.8 M3.2,22 h25.8 M8.4,7.1 v20.4 M13.6,7.1 v20.4 M18.8,7.1 v20.4 M24,7.1 v20.4" stroke="#9fd0f6" stroke-width=".5"/><path d="M5,12 l3,-1.6 3.4,.6 1.4,2 -2,1.6 -.6,2.6 -2,-.4 -1,-2.2z M9.8,18 l2.4,1 .4,3.6 -1.4,2.6 -1,-3z M16,13 l2.2,-1.6 1.8,.8 -.6,2.2 1.6,1.4 -.4,3.4 -1.8,2.4 -1.4,-3 -1.8,-2z M20,10.6 l4,-1 3.6,1.6 -.4,3 -2.4,2.6 -2,-1.2 -1.6,.2 -.6,-2.6z M24,21 l2.6,-.6 .8,2 -2,1.4z" fill="#fff"/><path d="M11.4,1.2 h12.6 a1,1 0 0 1 1,1 v7.8 a1,1 0 0 1 -1,1 h-3.4 l-2.2,4.2 -2.2,-4.2 h-4.8 a1,1 0 0 1 -1,-1 v-7.8 a1,1 0 0 1 1,-1z" fill="url(#gTag)" stroke="#d89a10" stroke-width=".5"/><text x="17.7" y="8.2" font-family="Liberation Sans, sans-serif" font-size="6.2" font-weight="bold" fill="#fff" text-anchor="middle">A-Z</text></svg></i>Locale</div>
   <div class="it" style="left:426px"><i><svg width="32" height="32" viewBox="0 0 32 32"><path d="M1.8,29.2 V25.4 C1.8,22.2 4,20.8 8,20.2 L12,19.7 h7.400 L24,20.200 C28.200,20.800 30.600,22.200 30.600,25.400 V29.200Z" fill="url(#gGreen)" stroke="#7aa62c" stroke-width=".6" stroke-linejoin="round"/><path d="M12.300,15.500 h6.800 v4.800 c-1,2.500 -5.800,2.500 -6.800,0z" fill="#d39c66"/><path d="M10.800,20 C12.200,23.600 19.400,23.600 20.600,20" fill="none" stroke="#f2f1e8" stroke-width="1.300"/><ellipse cx="15.900" cy="12.600" rx="5.300" ry="6.600" fill="url(#gSkin)"/><path d="M9.700,14.400 C7.600,10 8,3.400 13,1.400 C18,-.4 23.800,2.400 23.600,9 C23.600,11 23.200,13 22.400,14.400 C22.300,11.600 21.700,9.500 20.700,8.300 C18.400,9 14,9.100 11.400,7.900 C10.400,9.500 9.900,11.800 9.700,14.400Z" fill="url(#gHair)"/><path d="M13,3.400 C15,2.400 18,2.600 19.600,4.400" stroke="#f0b050" stroke-width="1.200" fill="none" opacity=".7"/><circle cx="25.200" cy="23.700" r="6.200" fill="url(#gInfo)" stroke="#4a90de" stroke-width=".5"/><circle cx="25.200" cy="20.600" r="1.050" fill="#fff"/><rect x="24.250" y="22.500" width="1.900" height="4.800" fill="#fff"/></svg></i>Personal<br>Information</div>
   <div class="it" style="left:510px"><i><svg width="32" height="32" viewBox="0 0 32 32"><rect x="3.2" y="7.3" width="14" height="9.3" rx="1" fill="#eef2f6" stroke="#7cbdf2" stroke-width="1.6"/><rect x="19.9" y="7.3" width="9.3" height="9.3" rx="1" fill="#eef2f6" stroke="#7cbdf2" stroke-width="1.6"/><rect x="3.2" y="19.6" width="19.2" height="8.6" rx="1" fill="#f0f0f0" stroke="#a4a4a4" stroke-width="1.5"/><text x="10.2" y="14" font-family="Liberation Sans, sans-serif" font-size="4.6" fill="#6aa8e6" text-anchor="middle">Ctrl</text><text x="24.5" y="14" font-family="Liberation Sans, sans-serif" font-size="4.6" fill="#6aa8e6" text-anchor="middle">C</text><text x="12.2" y="25.8" font-family="Liberation Sans, sans-serif" font-size="4.6" fill="#8a8a8a" text-anchor="middle">Shift</text></svg></i>Shortcuts<br>and Gestures</div>
  </div>
  <div class="grp" style="top:127px"><h3>Workspace Appearance and Behaviour</h3>
   <div class="it" style="left:6px"><i><svg width="32" height="32" viewBox="0 0 32 32"><rect x="2.3" y="4.4" width="28.2" height="24" rx="1" fill="#bcbcbc" stroke="#8e8e8e" stroke-width=".8"/><rect x="4.3" y="6.4" width="24.2" height="20" fill="url(#gFx)"/><path d="M4.3,20 C10,17 18,19 28.5,15 V26.4 H4.3Z" fill="#8fd0f6" opacity=".55"/><g fill="#f4c8ff"><path d="M12.6,4.6 l1,4.2 4.2,1 -4.2,1 -1,4.2 -1,-4.2 -4.2,-1 4.2,-1z"/><path d="M8,14 l.8,3 3,.8 -3,.8 -.8,3 -.8,-3 -3,-.8 3,-.8z"/><path d="M12.4,20.4 l.7,2.6 2.6,.7 -2.6,.7 -.7,2.6 -.7,-2.6 -2.6,-.7 2.6,-.7z"/></g><circle cx="12.6" cy="9.8" r="3.4" fill="#e060f0" opacity=".45"/><circle cx="8" cy="17.8" r="2.6" fill="#e060f0" opacity=".4"/><circle cx="12.4" cy="23.7" r="2.2" fill="#e060f0" opacity=".4"/><path d="M14.4,11 L29.6,28.6" stroke="#262626" stroke-width="3" stroke-linecap="round"/><path d="M14.4,11 L17.4,14.4" stroke="#9a50c8" stroke-width="3" stroke-linecap="round"/></svg></i>Desktop<br>Effects</div>
   <div class="it" style="left:90px"><i><svg width="32" height="32" viewBox="0 0 32 32"><g transform="translate(0,0.6)"><rect x="1.5" y="3.5" width="27.8" height="25.3" rx="1" fill="#bdbdbd" stroke="#8f8f8f" stroke-width=".8"/><rect x="3.6" y="5.6" width="23.6" height="21" fill="url(#gSky)"/><path d="M3.6,5.6 h23.6 v7.2 c-.8,2.4 -2,2.4 -2.6,0 c-.6,-1.6 -1.6,-1.2 -2.2,.6 c-.8,2.8 -2.2,2.6 -2.8,0 c-.6,-2 -1.8,-1.6 -2.4,.4 c-.8,3.4 -2.4,3.2 -3,0 c-.4,-1.8 -1.6,-1.6 -2.2,.2 c-.8,2.6 -2.2,2.4 -2.8,-.2 c-.6,-1.8 -1.6,-1.4 -2.2,.4 c-.6,2.2 -2.4,2 -3.4,-1.4z" fill="#aede5c"/><path d="M9.5,19.5 L17,10 L24.4,15.4 L17,25.2Z" fill="#efe9cc" stroke="#8f8a60" stroke-width=".7"/><path d="M12.5,17 l6,4.6 M14.8,13.6 l6,4.6" stroke="#cfc79c" stroke-width=".8"/><path d="M17,25.2 L24.4,15.4 L26.4,17.2 L19.4,26.8Z" fill="#a0a684" stroke="#70745a" stroke-width=".5"/><path d="M21.2,23.4 L23.8,20.4 L30.6,27 C31.6,29.4 29,31.2 27.2,29.8Z" fill="#ea952c" stroke="#b26810" stroke-width=".6"/></g></svg></i>Workspace<br>Appearance</div>
   <div class="it" style="left:174px"><i><svg width="32" height="32" viewBox="0 0 32 32"><rect x="2.4" y="2.5" width="26.6" height="26.8" rx="2" fill="url(#gAcc)" stroke="#4a8cd4" stroke-width=".6"/><circle cx="15.7" cy="7.6" r="2.3" fill="#fff"/><path d="M7.6,11.6 L15.7,13 L23.8,11.6" stroke="#fff" stroke-width="2.3" stroke-linecap="round" stroke-linejoin="round" fill="none"/><path d="M15.7,12 V18" stroke="#fff" stroke-width="3.6" stroke-linecap="round"/><path d="M14.8,17 L12,26.4 M16.6,17 L19.4,26.4" stroke="#fff" stroke-width="2.4" stroke-linecap="round"/></svg></i>Accessibility</div>
   <div class="it" style="left:258px"><i><svg width="32" height="32" viewBox="0 0 32 32"><rect x="1.3" y="2.5" width="27.7" height="26.3" rx="1.6" fill="url(#gWinBody)" stroke="#a9a9a9" stroke-width=".8"/><path d="M1.3,7.9 v-3.8 a1.6,1.6 0 0 1 1.6,-1.6 h24.5 a1.6,1.6 0 0 1 1.6,1.6 v3.8z" fill="url(#gTitle)"/><rect x="4.4" y="10.6" width="3" height="3.6" fill="#fff" stroke="#b4b4b4" stroke-width=".5"/><rect x="4.4" y="16.6" width="3" height="3" fill="#6fb0ee"/><rect x="4.4" y="22.2" width="3" height="3" fill="#6fb0ee"/><path d="M10.4,11.4 h9 M10.4,13.4 h13 M10.4,18 h4" stroke="#c8c8c8" stroke-width=".9"/><path d="M13.6,20.6 L18.6,27.4 L29.6,12.4" fill="none" stroke="#6da32a" stroke-width="4.4" stroke-linecap="round" stroke-linejoin="round"/><path d="M13.6,20.6 L18.6,27.4 L29.6,12.4" fill="none" stroke="#9ad450" stroke-width="2.9" stroke-linecap="round" stroke-linejoin="round"/></svg></i>Default<br>Applications</div>
   <div class="it" style="left:342px"><i><svg width="32" height="32" viewBox="0 0 32 32"><path d="M13.6,1.6 L26.6,7.6 L21.6,27 L4.4,29.6 L2,20.4Z" fill="url(#gTag)" stroke="#d4920e" stroke-width=".7" stroke-linejoin="round"/><circle cx="6.4" cy="25.4" r="1.5" fill="#fff" stroke="#c88a10" stroke-width=".5"/><path d="M22.4,20.6 L29.6,29" stroke="#5c3a1c" stroke-width="3.2" stroke-linecap="round"/><path d="M24.6,23.2 L29.4,28.8" stroke="#b06a2a" stroke-width="2.2" stroke-linecap="round"/><circle cx="17" cy="14.6" r="7.4" fill="url(#gGlass)" stroke="#4a4a4a" stroke-width="1.35"/><path d="M12.4,12.4 C13.4,9.8 16,8.6 18.6,9.2" stroke="#fff" stroke-width="1.4" fill="none" stroke-linecap="round"/></svg></i>Desktop<br>Search</div>
   <div class="it" style="left:426px"><i><svg width="32" height="32" viewBox="0 0 32 32"><rect x="1.7" y="4.4" width="29" height="24.8" rx="1.2" fill="#c2c2c2" stroke="#8f8f8f" stroke-width=".8"/><rect x="3.7" y="6.4" width="11.6" height="9.6" fill="url(#gPane)"/><rect x="17" y="6.4" width="11.6" height="9.6" fill="url(#gPane)"/><rect x="3.7" y="17.6" width="11.6" height="9.6" fill="url(#gPane)"/><rect x="17" y="17.6" width="11.6" height="9.6" fill="url(#gPane)"/><path d="M3.7,12 l11.6,-3 M17,12 l11.6,-3 M3.7,23.2 l11.6,-3 M17,23.2 l11.6,-3" stroke="#fff" stroke-width="2" opacity=".25"/></svg></i>Window<br>Behaviour</div>
   <div class="it" style="left:510px"><i><svg width="32" height="32" viewBox="0 0 32 32"><path d="M3.4,24 h28 v5.2 h-28z" fill="#e2efd2" stroke="#a2a2a2" stroke-width=".7"/><path d="M4.4,23.6 h26 l1,2.8 h-28z" fill="#98c45a"/><path d="M3.4,18.4 h28 v5 h-28z" fill="#f8ead0" stroke="#a2a2a2" stroke-width=".7"/><path d="M4.4,18 h26 l1,2.8 h-28z" fill="#e9b122"/><path d="M3.4,12.8 h28 v5 h-28z" fill="#f2d6cc" stroke="#a2a2a2" stroke-width=".7"/><path d="M4.4,12.4 h26 l1,2.8 h-28z" fill="#d27a4a"/><path d="M6.2,3.4 H27 L31.6,10 V12.4 H3 V10Z" fill="#d6e6f6" stroke="#9a9a9a" stroke-width=".8" stroke-linejoin="round"/><path d="M6.8,4.2 H26.4 L30.4,9.8 H3.8Z" fill="url(#gPane)"/></svg></i>Workspace<br>Behaviour</div>
  </div>
  <div class="grp" style="top:249px"><h3>Network and Connectivity</h3>
   <div class="it" style="left:6px"><i><svg width="32" height="32" viewBox="0 0 32 32"><rect x="6.7" y="1.6" width="20.5" height="28.2" rx="8.8" ry="9.6" fill="url(#gBt)" stroke="#4f94de" stroke-width=".7"/><path d="M12.2,10.4 L21.2,19.6 L16.9,24.2 V6.4 L21.2,11.2 L12.2,20.6" fill="none" stroke="#fff" stroke-width="1.7" stroke-linejoin="round" stroke-linecap="round"/></svg></i>Bluetooth</div>
   <div class="it" style="left:90px"><i><svg width="32" height="32" viewBox="0 0 32 32"><circle cx="16.5" cy="13.7" r="12.3" fill="url(#gGlobe)" stroke="#3c80cc" stroke-width=".5"/><g transform="translate(0.0,0.0)" fill="#9ccb3e"><path d="M13,4.4 c3,-1.6 7,-1.2 9.4,.6 l-1.6,1.6 2.4,.4 1.2,2.6 -2.6,.6 -1,2.8 1.8,2.6 c-.4,3 -2.2,5.6 -4.4,7.4 l-2.2,-3.4 .4,-3.6 -2.8,-2 -.6,-3.2 2.4,-2.2 -2.4,-1.6z"/><path d="M6,8.4 c1,-1.8 2.6,-3.2 4.4,-4.2 l1,2.2 -1.6,2.4 -2,2.6 -2.4,.4z"/><path d="M5,16.4 l2.6,1 1.4,3 -.6,2.4 c-1.8,-1.6 -3,-3.8 -3.4,-6.4z"/></g><ellipse cx="14.5" cy="7.699999999999999" rx="8" ry="5" fill="#fff" opacity=".2"/><path d="M16.5,26 V28.6 M4,29 H29" stroke="#9a9a9a" stroke-width="1.2"/><ellipse cx="16.5" cy="29" rx="3.2" ry="1.4" fill="#f2f2f2" stroke="#9a9a9a" stroke-width=".7"/></svg></i>Network<br>Settings</div>
   <div class="it" style="left:174px"><i><svg width="32" height="32" viewBox="0 0 32 32"><circle cx="14" cy="13.6" r="12.3" fill="url(#gGlobe)" stroke="#3c80cc" stroke-width=".5"/><g transform="translate(-2.5,-0.09999999999999964)" fill="#9ccb3e"><path d="M13,4.4 c3,-1.6 7,-1.2 9.4,.6 l-1.6,1.6 2.4,.4 1.2,2.6 -2.6,.6 -1,2.8 1.8,2.6 c-.4,3 -2.2,5.6 -4.4,7.4 l-2.2,-3.4 .4,-3.6 -2.8,-2 -.6,-3.2 2.4,-2.2 -2.4,-1.6z"/><path d="M6,8.4 c1,-1.8 2.6,-3.2 4.4,-4.2 l1,2.2 -1.6,2.4 -2,2.6 -2.4,.4z"/><path d="M5,16.4 l2.6,1 1.4,3 -.6,2.4 c-1.8,-1.6 -3,-3.8 -3.4,-6.4z"/></g><ellipse cx="12" cy="7.6" rx="8" ry="5" fill="#fff" opacity=".2"/><path d="M17.8,18.4 V14.6 a4.3,4.3 0 0 1 8.6,0 V18.4" fill="none" stroke="#8c8c8c" stroke-width="2.6"/><path d="M17.8,18.4 V14.6 a4.3,4.3 0 0 1 8.6,0 V18.4" fill="none" stroke="#dcdcdc" stroke-width="1.2"/><rect x="14.9" y="17.6" width="14.2" height="12.2" rx="1" fill="url(#gSilver)" stroke="#868686" stroke-width=".7"/><path d="M15.4,20.4 h13.2 M15.4,23 h13.2" stroke="#a8a8a8" stroke-width=".8"/><rect x="15.3" y="26" width="13.4" height="3.4" fill="#f2c21c"/><path d="M16,29.4 l2.4,-3.4 h2 l-2.4,3.4z M20.6,29.4 l2.4,-3.4 h2 l-2.4,3.4z M25.2,29.4 l2.4,-3.4 h1.1 v1.4 l-1.4,2z" fill="#2a2a2a"/></svg></i>SSL<br>Preferences</div>
  </div>
  <div class="grp" style="top:370px"><h3>Hardware</h3>
   <div class="it" style="left:6px"><i><svg width="32" height="32" viewBox="0 0 32 32"><rect x="6.2" y="2" width="14.8" height="8.6" fill="#ececec" stroke="#9a9a9a" stroke-width=".7"/><rect x="8.8" y="4.6" width="3" height="2.4" fill="#333"/><rect x="15.2" y="4.6" width="3" height="2.4" fill="#333"/><rect x="2.6" y="9.8" width="21.8" height="5" rx="1.4" fill="#1e1e1e"/><path d="M1.8,14.4 h23.4 v13.6 a1.6,1.6 0 0 1 -1.6,1.6 h-20.2 a1.6,1.6 0 0 1 -1.6,-1.6z" fill="url(#gUsbY)" stroke="#d09410" stroke-width=".5"/><g transform="translate(22,22.2)"><path d="M-1.5,-8.4 h3 l.6,2 1.8,.8 1.8,-1 2.2,2.2 -1,1.8 .8,1.8 2,.6 v3 l-2,.6 -.8,1.8 1,1.8 -2.2,2.2 -1.8,-1 -1.8,.8 -.6,2 h-3 l-.6,-2 -1.8,-.8 -1.8,1 -2.2,-2.2 1,-1.8 -.8,-1.8 -2,-.6 v-3 l2,-.6 .8,-1.8 -1,-1.8 2.2,-2.2 1.8,1 1.8,-.8z" fill="url(#gGear)" stroke="#8a8a8a" stroke-width=".6"/><circle r="4" fill="#8e8e8e"/><circle r="2.8" fill="#d4d4d4"/><path d="M-1.4,1 L1.6,-1.2" stroke="#666" stroke-width="1"/></g></svg></i>Device<br>Actions</div>
   <div class="it" style="left:90px"><i><svg width="32" height="32" viewBox="0 0 32 32"><rect x="2" y="6.8" width="29.2" height="23" rx="2" fill="url(#gCam)" stroke="#3a3a3a" stroke-width=".6"/><path d="M2,12 v-3.2 a2,2 0 0 1 2,-2 h25.2 a2,2 0 0 1 2,2 v3.2z" fill="#dadada" stroke="#8a8a8a" stroke-width=".5"/><rect x="6" y="8" width="5" height="2.4" fill="#5a5a5a"/><circle cx="24.4" cy="9.4" r="1.2" fill="#6a50a0"/><rect x="2.2" y="27" width="28.8" height="2.6" fill="#c8c8c8"/><circle cx="19" cy="20" r="8.4" fill="#17171c" stroke="#8c8c8c" stroke-width="1.1"/><circle cx="19" cy="20" r="5.6" fill="url(#gLens)"/><ellipse cx="19" cy="17" rx="2.6" ry="2" fill="#d0a0f4" opacity=".85"/><ellipse cx="19" cy="23.4" rx="2.2" ry="1.6" fill="#58c8a0" opacity=".8"/></svg></i>Digital<br>Camera</div>
   <div class="it" style="left:174px"><i><svg width="32" height="32" viewBox="0 0 32 32"><rect x="13.2" y="24.6" width="6.6" height="3.4" fill="#b4b4b4"/><path d="M8.6,29.6 c0,-1.6 3,-2 8,-2 s8,.4 8,2z" fill="#cfcfcf" stroke="#9c9c9c" stroke-width=".5"/><rect x="2.6" y="5.4" width="27.4" height="19.6" rx="1.5" fill="#dcdcdc" stroke="#8f8f8f" stroke-width=".8"/><rect x="4.5" y="7.2" width="23.6" height="15.4" fill="url(#gFx)"/><path d="M4.5,16 C12,13 20,15 28.1,11 V22.6 H4.5Z" fill="#9cd4f8" opacity=".5"/><rect x="1.8" y="12.8" width="29.4" height="4.8" fill="#f2c222" stroke="#c4940e" stroke-width=".6"/><path d="M4,15.2 v2.2 M7,15.8 v1.6 M10,15.2 v2.2 M13,15.8 v1.6 M16,15.2 v2.2 M19,15.8 v1.6 M22,15.2 v2.2 M25,15.8 v1.6 M28,15.2 v2.2" stroke="#8a6a08" stroke-width=".6"/><path d="M29.4,17.6 C31,22 30.6,26 30.4,30 L22.6,29.4 C26,28 28.4,24 27.6,19.6Z" fill="#f0b61c" stroke="#c4900c" stroke-width=".5"/></svg></i>Display and<br>Monitor</div>
   <div class="it" style="left:258px"><i><svg width="32" height="32" viewBox="0 0 32 32"><path d="M9.4,10.6 C5.6,6.4 7.6,3.6 11.6,4.2 C15.6,4.8 17.6,3.2 20.6,2" fill="none" stroke="#5a5a5a" stroke-width="1.3" stroke-linecap="round"/><rect x="2.3" y="10.6" width="29" height="19.4" rx="1.6" fill="#ececec" stroke="#6e6e6e" stroke-width="1.3"/><path d="M4,14 h25.6 M4,17.6 h25.6 M4,21.2 h25.6 M4,24.8 h25.6" stroke="#b4b4b4" stroke-width=".8"/><path d="M7.6,14 v10.8 M11.2,14 v10.8 M14.8,14 v10.8 M18.4,14 v10.8 M22,14 v10.8 M25.6,14 v10.8" stroke="#cdcdcd" stroke-width=".7"/><rect x="8" y="26" width="16" height="2.4" fill="#fff" stroke="#c4c4c4" stroke-width=".5"/><path d="M4,12.4 h5" stroke="#5a9fe6" stroke-width="1"/><path d="M22,12.4 h3" stroke="#5a9fe6" stroke-width="1"/><path d="M26,12.4 h3" stroke="#e8a030" stroke-width="1"/></svg></i>Input<br>Devices</div>
   <div class="it" style="left:342px"><i><svg width="32" height="32" viewBox="0 0 32 32"><rect x="13.6" y="1.2" width="9.4" height="2.6" rx="1" fill="#bdbdbd" stroke="#8c8c8c" stroke-width=".5"/><rect x="8.5" y="2.6" width="19.6" height="28" rx="3.2" fill="url(#gBatS)" stroke="#8a8a8a" stroke-width=".7"/><rect x="8.9" y="10" width="18.8" height="16.4" fill="url(#gBatG)"/><path d="M8.9,13.6 h18.8 M8.9,17.6 h18.8 M8.9,21.6 h18.8" stroke="#d6f08a" stroke-width="1" opacity=".8"/><path d="M8.9,10 h18.8 M8.9,26.4 h18.8" stroke="#7a9a30" stroke-width=".6"/></svg></i>Power<br>Management</div>
   <div class="it" style="left:426px"><i><svg width="32" height="32" viewBox="0 0 32 32"><rect x="8.7" y="9.6" width="18" height="13" rx="1" fill="#3a3a3a"/><path d="M10.8,3.8 h10.4 l3.4,3.2 v8 h-13.8z" fill="#f6f6f6" stroke="#ababab" stroke-width=".6"/><path d="M21.2,3.8 v3.2 h3.4" fill="#dedede" stroke="#ababab" stroke-width=".5"/><path d="M2.9,19.6 a3.6,3.6 0 0 1 3.6,-3.6 h2.2 v3.4 h18 v-3.4 h.4 a3.6,3.6 0 0 1 3.6,3.6 v6.4 a1.6,1.6 0 0 1 -1.6,1.6 h-24.6 a1.6,1.6 0 0 1 -1.6,-1.6z" fill="url(#gPrn)" stroke="#a2a2a2" stroke-width=".6"/><rect x="8.7" y="18.6" width="18" height="3.6" fill="#2e2e2e"/><rect x="5.4" y="27" width="22.8" height="2.8" rx="1" fill="#c2c2c2" stroke="#9a9a9a" stroke-width=".5"/><circle cx="27.4" cy="24.4" r=".9" fill="#7ad040"/></svg></i>Printers</div>
   <div class="it" style="left:510px"><i><svg width="32" height="32" viewBox="0 0 32 32"><path d="M5.4,2.6 H27.4 L29.8,23 H2.8Z" fill="url(#gDrive)" stroke="#3f70b8" stroke-width=".8" stroke-linejoin="round"/><path d="M2.8,23 h27 v5.8 a1.2,1.2 0 0 1 -1.2,1.2 h-24.6 a1.2,1.2 0 0 1 -1.2,-1.2z" fill="url(#gDark)" stroke="#222" stroke-width=".5"/><path d="M5.4,2.6 H27.4" stroke="#2c2c2c" stroke-width="1.2"/><g stroke="#fff" stroke-width="1.1" fill="none" stroke-linecap="round"><path d="M16.4,7.4 V18.4"/><path d="M16.4,15.4 L12.8,12.8 V10.8"/><path d="M16.4,13.6 L20,11.4 V9.8"/></g><path d="M14.8,8.4 l1.6,-2.8 1.6,2.8z" fill="#fff"/><circle cx="16.4" cy="19.2" r="1.6" fill="#fff"/><circle cx="12.8" cy="10.4" r="1" fill="#fff"/><rect x="19.1" y="8.6" width="1.8" height="1.8" fill="#fff"/><circle cx="26.6" cy="27" r=".9" fill="#f0a020"/></svg></i>Removable<br>Devices</div>
   <div class="it" style="left:594px"><i><svg width="32" height="32" viewBox="0 0 32 32"><circle cx="16.2" cy="19.4" r="11.4" fill="url(#gBlueB)" stroke="#3a78c8" stroke-width=".5"/><ellipse cx="16.2" cy="14" rx="8.6" ry="5.4" fill="#fff" opacity=".18"/><path d="M12.8,13.4 L22.8,19.4 L12.8,25.4Z" fill="#f4f4f4"/><path d="M5,17 C5,7.6 9.6,3.6 16.2,3.6 C22.8,3.6 27.4,7.6 27.4,17" fill="none" stroke="#3c3c3c" stroke-width="2.5"/><rect x="1.8" y="13.6" width="5.4" height="12.4" rx="2.6" fill="url(#gTag)" stroke="#7a5a0a" stroke-width=".6"/><rect x="25.2" y="13.6" width="5.4" height="12.4" rx="2.6" fill="url(#gTag)" stroke="#7a5a0a" stroke-width=".6"/><rect x="4.8" y="14.6" width="2.2" height="10.4" rx="1" fill="#2c2c2c"/><rect x="25.4" y="14.6" width="2.2" height="10.4" rx="1" fill="#2c2c2c"/></svg></i>Multimedia</div>
  </div>
  <div class="grp" style="top:491px"><h3>System Administration</h3>
   <div class="it" style="left:6px"><i><svg width="32" height="32" viewBox="0 0 32 32"><rect x="2.9" y="3.8" width="27.6" height="26.2" rx="1.6" fill="url(#gSilver)" stroke="#9e9e9e" stroke-width=".8"/><circle cx="16.7" cy="16.6" r="11.4" fill="#2b2b2b" stroke="#555" stroke-width=".6"/><g stroke="#5aaef0" stroke-width=".8" opacity=".6"><path d="M16.7,6.4 v1.6 M16.7,25.2 v1.6 M6.5,16.6 h1.6 M25.3,16.6 h1.6 M11.6,7.8 l.7,1.2 M21.8,7.8 l-.7,1.2 M7.9,11.5 l1.2,.7 M25.5,11.5 l-1.2,.7 M7.9,21.7 l1.2,-.7 M25.5,21.7 l-1.2,-.7 M11.6,25.4 l.7,-1.2 M21.8,25.4 l-.7,-1.2"/></g><path d="M16.7,16.6 L16.1,8.6 M16.7,16.6 L23.2,22.8" stroke="#62b4f4" stroke-width="1.5" stroke-linecap="round"/></svg></i>Date &amp;<br>Time (dra...</div>
   <div class="it" style="left:90px"><i><svg width="32" height="32" viewBox="0 0 32 32"><rect x="5" y="2.6" width="25" height="27.6" rx="2.4" fill="url(#gPaper)" stroke="#b2b2b2" stroke-width=".8"/><rect x="29.4" y="11" width="2.2" height="9.4" rx=".8" fill="#5a9fe6"/><g fill="#e8e8e8" stroke="#9a9a9a" stroke-width=".6"><circle cx="5" cy="7.4" r="1.3"/><circle cx="5" cy="12.6" r="1.3"/><circle cx="5" cy="17.8" r="1.3"/><circle cx="5" cy="23" r="1.3"/><circle cx="5" cy="27.4" r="1"/></g><text x="18" y="24.6" font-family="Liberation Serif, serif" font-size="23.500" font-weight="bold" fill="#2c2c2c" text-anchor="middle">T</text></svg></i>Font<br>Management</div>
   <div class="it" style="left:174px"><i><svg width="32" height="32" viewBox="0 0 32 32"><rect x="1" y="9" width="29.4" height="21" rx="2" fill="url(#gAcc)" stroke="#4a8cd4" stroke-width=".6"/><rect x="11.4" y="11" width="8.6" height="2.2" rx="1" fill="#3c78c0"/><rect x="12.2" y="2.6" width="7" height="10" fill="#e6e6e6" stroke="#8e8e8e" stroke-width=".7"/><path d="M14.2,4.8 v2 a1.5,1.5 0 0 0 3,0 v-2" fill="none" stroke="#7a7a7a" stroke-width=".8"/><rect x="4" y="16.4" width="23.2" height="4.4" fill="#f6f6f6" stroke="#c2d8f0" stroke-width=".5"/><rect x="4" y="22.4" width="23.2" height="4.4" fill="#e9e9e9" stroke="#c2d8f0" stroke-width=".5"/><text x="5.4" y="20" font-family="Liberation Sans, sans-serif" font-size="3.6" fill="#777">Login</text><path d="M6,24.6 h12" stroke="#8a8a8a" stroke-width="1.2" stroke-dasharray="1.2,.9"/></svg></i>Login Screen</div>
   <div class="it" style="left:258px"><i><svg width="32" height="32" viewBox="0 0 32 32"><rect x="1.2" y="3.3" width="27.5" height="26.5" rx="1.6" fill="url(#gWinBody)" stroke="#a9a9a9" stroke-width=".8"/><path d="M1.2,8.7 v-3.8 a1.6,1.6 0 0 1 1.6,-1.6 h24.3 a1.6,1.6 0 0 1 1.6,1.6 v3.8z" fill="url(#gTitle)"/><rect x="4.4" y="11.4" width="3" height="3.6" fill="#fff" stroke="#b4b4b4" stroke-width=".5"/><rect x="4.4" y="17.4" width="3" height="3" fill="#6fb0ee"/><rect x="4.4" y="22.6" width="3" height="3" fill="#6fb0ee"/><path d="M11.6,10.6 C15.6,7 19.6,12.4 23.6,9.4 C26.4,7.6 29,9.6 30.4,12.4 L28.2,22 C25.4,25.6 21.6,22 18.8,24.2 C17.6,25 16.4,24.6 15.8,24.2Z" fill="#fafafa" stroke="#555" stroke-width=".6"/><g fill="#2a2a2a"><path d="M14.4,9.6 l3,.6 1,3.2 -3,-.8z"/><path d="M20.6,10.6 l3,-1 1,3.2 -3,1z"/><path d="M26.4,9.2 l2.4,1.4 .4,3 -2,-1.2z"/><path d="M17.6,13.6 l3,.6 1,3.2 -3,-.8z"/><path d="M23.6,13.6 l3,-1 .6,3.2 -2.8,1z"/><path d="M15.4,16 l2.6,.6 .8,3.2 -2.6,-.6z"/><path d="M21.2,17.6 l3,-.6 .8,3 -3,.6z"/><path d="M26.6,16 l2.4,.4 -.8,3 -1,.6z"/><path d="M18.6,20.4 l2.8,.2 .4,2 -2.2,.8z"/><path d="M24.8,20.2 l2.4,.4 -1.4,2 -1,-.2z"/></g><path d="M10.6,10.4 L18,30.4" stroke="#e29b32" stroke-width="2.2" stroke-linecap="round"/></svg></i>Startup and<br>Shutdown</div>
   <div class="it" style="left:342px"><i><svg width="32" height="32" viewBox="0 0 32 32"><rect x="2.4" y="3.3" width="27.4" height="26.5" rx="1.6" fill="url(#gWinBody)" stroke="#a9a9a9" stroke-width=".8"/><path d="M2.4,8.7 v-3.8 a1.6,1.6 0 0 1 1.6,-1.6 h24.2 a1.6,1.6 0 0 1 1.6,1.6 v3.8z" fill="url(#gTitle)"/><rect x="5.8" y="11.2" width="3" height="3.6" fill="#fff" stroke="#b4b4b4" stroke-width=".5"/><path d="M5.6,18.4 l1.8,2.2 2.8,-4 M5.6,24 l1.8,2.2 2.8,-4" fill="none" stroke="#7cc030" stroke-width="1.8" stroke-linecap="round" stroke-linejoin="round"/><path d="M12,11.6 h8" stroke="#c8c8c8" stroke-width=".9"/><rect x="19.6" y="10" width="4" height="3.4" rx=".8" fill="#c8c8c8" stroke="#7c7c7c" stroke-width=".6"/><circle cx="21.6" cy="22" r="9.4" fill="url(#gSilver)" stroke="#838383" stroke-width=".9"/><circle cx="21.6" cy="22" r="7.2" fill="#2b2b2b"/><path d="M21.6,15.6 v1.2 M21.6,27.2 v1.2 M15.2,22 h1.2 M26.8,22 h1.2" stroke="#5aaef0" stroke-width=".8"/><path d="M21.6,22 L18.4,17.4 M21.6,22 H25.6" stroke="#62b4f4" stroke-width="1.3" stroke-linecap="round"/><path d="M21.6,22 V27.4" stroke="#e8742a" stroke-width="1.3" stroke-linecap="round"/></svg></i>Task<br>Scheduler</div>
  </div>
 </div>
</div>
<svg id="pnl" width="1170" height="43" viewBox="0 820 1170 43" style="position:absolute;left:0;top:820px">
<defs>
<radialGradient id="pOm" cx=".45" cy=".3" r=".75"><stop offset="0" stop-color="#7d9dd4"/><stop offset=".55" stop-color="#2a4c94"/><stop offset="1" stop-color="#122a66"/></radialGradient>
<linearGradient id="pFold" x1="0" y1="0" x2="0" y2="1"><stop offset="0" stop-color="#9ccdf2"/><stop offset="1" stop-color="#cbe6fa"/></linearGradient>
<linearGradient id="pFold2" x1="0" y1="0" x2="0" y2="1"><stop offset="0" stop-color="#5f9fe0"/><stop offset="1" stop-color="#8fc0ee"/></linearGradient>
<linearGradient id="pYel" x1="0" y1="0" x2="0" y2="1"><stop offset="0" stop-color="#fedc50"/><stop offset="1" stop-color="#f4ae10"/></linearGradient>
<radialGradient id="pFx" cx=".45" cy=".3" r=".75"><stop offset="0" stop-color="#f59a24"/><stop offset=".6" stop-color="#e8601c"/><stop offset="1" stop-color="#d8401a"/></radialGradient>
<radialGradient id="pFxG" cx=".45" cy=".15" r=".9"><stop offset="0" stop-color="#56bcf4"/><stop offset=".5" stop-color="#1e78d0"/><stop offset="1" stop-color="#12247a"/></radialGradient>
<linearGradient id="pHp" x1="0" y1="0" x2="0" y2="1"><stop offset="0" stop-color="#1e96ea"/><stop offset="1" stop-color="#0a4cac"/></linearGradient>
<linearGradient id="pSil" x1="0" y1="0" x2="0" y2="1"><stop offset="0" stop-color="#f2f2f2"/><stop offset="1" stop-color="#a8a8a8"/></linearGradient>
</defs>
<rect x="0" y="835.800" width="1170" height="28" fill="#6d7f8a"/>
<path d="M0,835.800 H1170 V852 C1120,851 1060,849.600 1020,848.400 C980,847.200 940,846.400 905,845.900 C870,845 840,844.300 800,844.500 C740,845 680,847 600,849.500 C520,852 460,853.200 400,854.200 C340,855.600 290,857 240,856.800 C200,856.400 170,854.600 150,853 C100,849.600 50,847.400 0,846.400Z" fill="#9eabb1"/>
<path d="M0,836.200 H1170" stroke="#a6b3b8" stroke-width=".8" opacity=".6"/>
<!-- OM launcher -->
<circle cx="18.600" cy="844" r="13.200" fill="#cfe0f0" opacity=".25"/>
<circle cx="18.600" cy="844" r="12.400" fill="url(#pOm)"/>
<circle cx="17.600" cy="844.800" r="8.700" fill="#fff"/>
<circle cx="21.800" cy="843" r="6.900" fill="#3a5ca4"/>
<circle cx="21.400" cy="843.400" r="5.500" fill="none" stroke="#fff" stroke-width=".9" opacity=".9"/>
<circle cx="21.400" cy="843.400" r="4.100" fill="url(#pOm)"/>
<!-- folder -->
<rect x="50" y="830" width="19" height="13" fill="#f6f6f2" stroke="#d2d2cc" stroke-width=".5"/><rect x="50" y="830" width="19" height="1.6" fill="#cfe6a4"/>
<path d="M47.5,832 l5,-2.4 3,4.8 -5.6,3z" fill="#f6d84a"/>
<rect x="60" y="833.4" width="10.6" height="9" fill="#b08a62"/><rect x="61.6" y="835" width="7.4" height="7" fill="#a8d4f6"/>
<path d="M44,855.4 h29 v2.6 a1.4,1.4 0 0 1 -1.4,1.4 h-26.2 a1.4,1.4 0 0 1 -1.4,-1.4z" fill="#f2f2f2" stroke="#cfcfcf" stroke-width=".4"/>
<path d="M45,840.4 h9 l1.6,1.6 h16.4 l-1,14.4 h-25z" fill="url(#pFold)" stroke="#8fbfe6" stroke-width=".5"/>
<!-- firefox -->
<circle cx="99" cy="840.800" r="10.800" fill="url(#pFxG)"/>
<path d="M93,850.400 C96,849.600 99.600,848.200 103.600,845.800 C104,849 102,852 98,853.200Z" fill="#14206a"/>
<path d="M86,833.300 C86.800,834.400 87.600,835 88.600,835.400 C89.800,834.800 91.200,834.800 92.400,835.200 C93,834.400 93.800,833.900 94.800,833.800 C94.200,835 94.200,836.400 94.800,837.600 C95.600,838.400 96.400,839 97.400,839.600 C95.800,840.400 94.600,841.200 93.200,841.400 C92.200,842.200 91.200,843 90.400,843.400 C91.600,844.800 93.400,845.400 95.400,845.200 C97.200,845 98.800,845.400 100.600,846.800 C98.400,846.600 96.400,847.200 94.600,848.400 C92.800,849.400 92.400,850.600 93.400,851.800 C95.400,854.200 99.600,854 102.600,851.400 C105.400,848.800 106.400,844.800 105.800,841 C107,843 107.400,845 107,847 C108.600,844 108.800,840 107.600,836.400 C110.400,838.800 112,842.400 111.800,846 C111.400,853 105.600,858.800 97.600,858.800 C89.600,858.800 83.200,852.400 83.200,844.400 C83.200,840 84.200,836 86,833.300Z" fill="url(#pFx)"/>
<path d="M105.600,834.800 C110,837.500 112,842 111.800,846 C111.600,850 109.600,853.600 106.600,856 C107.600,852.600 107,850 106.200,848 C106.600,845 106.400,842.600 105.800,841 C106.600,839 106.400,836.600 105.600,834.800Z" fill="url(#pYel)"/>
<path d="M105.600,834.800 C107,835.600 108.200,836.600 109,838 C108,837.400 107,837.200 106.200,837.400Z" fill="#fff6c0"/>
<!-- bubble -->
<path d="M125,858.6 C126.6,856 127,853.4 126.4,851 L133,856Z" fill="#f4ae10"/>
<ellipse cx="136.3" cy="843.2" rx="13.5" ry="13.4" fill="url(#pYel)"/>
<circle cx="129" cy="844.6" r="1.8" fill="#fff"/><circle cx="136.5" cy="844.6" r="1.8" fill="#fff"/><circle cx="144" cy="844.6" r="1.8" fill="#fff"/>
<!-- mail -->
<rect x="162" y="834.8" width="28" height="18.8" fill="#f6f6f8" stroke="#c2c2c8" stroke-width=".4"/>
<rect x="162.6" y="835.4" width="26.8" height="17.6" fill="none" stroke="#d8584c" stroke-width="1" stroke-dasharray="2,4" opacity=".7"/>
<rect x="162.6" y="835.4" width="26.8" height="17.6" fill="none" stroke="#4a78d0" stroke-width="1" stroke-dasharray="2,4" stroke-dashoffset="3" opacity=".7"/>
<rect x="182.6" y="837.4" width="4.4" height="4.6" fill="#4a86e0"/>
<path d="M164,831.2 L187.4,857.4" stroke="#8a8a8a" stroke-width="3.4" stroke-linecap="round"/><path d="M164,831.2 L187,857" stroke="#d6d6d6" stroke-width="1.6" stroke-linecap="round"/>
<!-- media -->
<rect x="201" y="832.6" width="28.6" height="26" rx="1.4" fill="url(#pFold2)" stroke="#4a8cd8" stroke-width=".5"/>
<path d="M201,846 C210,840 220,848 229.6,841 V858.6 H201Z" fill="#9ccdf4" opacity=".5"/>
<path d="M210,838.8 L223.4,846 L210,853.4Z" fill="#fff"/>
<g fill="#b4c0c6" opacity=".8"><rect x="237.4" y="840.4" width="4.4" height="2.8"/><rect x="237.4" y="847.6" width="4.4" height="3.6"/><rect x="237.4" y="856" width="4.4" height="3.6"/>
<rect x="783.8" y="840" width="4.4" height="2.8"/><rect x="783.8" y="847.4" width="4.4" height="3.8"/><rect x="783.8" y="855.2" width="4.4" height="4.4"/></g>
<!-- downloads folder -->
<path d="M800,835.6 l1.4,-4.4 h11 l1.4,2.6 h10.6 v2z" fill="#ececec"/>
<path d="M795,835.4 h31 l-.6,21.6 h-29.8z" fill="url(#pFold2)" stroke="#5a94d6" stroke-width=".5"/>
<circle cx="810.4" cy="846" r="8" fill="#5590d4" opacity=".55"/><path d="M807.6,841 h5.6 v4 h3 l-5.8,5.6 -5.8,-5.6 h3z" fill="#80b4ea" opacity=".9"/>
<!-- desktop grid -->
<rect x="836" y="831.8" width="27.2" height="23.6" rx="1" fill="url(#pSil)" stroke="#9a9a9a" stroke-width=".5"/>
<rect x="838" y="833.8" width="10.8" height="9" fill="url(#gPane)"/><rect x="850.4" y="833.8" width="10.8" height="9" fill="url(#gPane)"/><rect x="838" y="844.4" width="10.8" height="9" fill="url(#gPane)"/><rect x="850.4" y="844.4" width="10.8" height="9" fill="url(#gPane)"/>
<!-- systemsettings -->
<ellipse cx="888.4" cy="860" rx="11" ry="1.4" fill="#7fe0f0" opacity=".7"/>
<rect x="874" y="830" width="28.8" height="28" rx="1.4" fill="url(#pSil)" stroke="#8e8e8e" stroke-width=".5"/>
<rect x="875.6" y="833.6" width="25.6" height="17" fill="#3f7fd0"/>
<path d="M875.6,850.6 h6 l2,3 h9.6 l2,-3 h6 v6.4 h-25.600z" fill="#b9b9b9" stroke="#8a8a8a" stroke-width=".4"/>
<g transform="translate(885.4,842.6) scale(.82)"><path d="M-1.5,-8.4 h3 l.6,2 1.8,.8 1.8,-1 2.2,2.2 -1,1.8 .8,1.8 2,.6 v3 l-2,.6 -.8,1.8 1,1.8 -2.2,2.2 -1.800,-1 -1.800,.8 -.6,2 h-3 l-.6,-2 -1.800,-.8 -1.800,1 -2.200,-2.200 1,-1.800 -.8,-1.800 -2,-.6 v-3 l2,-.6 .8,-1.800 -1,-1.800 2.200,-2.200 1.800,1 1.800,-.8z" fill="#e8e8e8" stroke="#8a8a8a" stroke-width=".6"/><circle r="3.400" fill="#9a9a9a"/><circle r="2" fill="#dcdcdc"/></g>
<g transform="translate(895.6,838.6) scale(.5)"><path d="M-1.5,-8.4 h3 l.6,2 1.8,.8 1.8,-1 2.2,2.2 -1,1.8 .8,1.8 2,.6 v3 l-2,.6 -.8,1.8 1,1.8 -2.2,2.2 -1.800,-1 -1.800,.8 -.6,2 h-3 l-.6,-2 -1.800,-.8 -1.800,1 -2.200,-2.200 1,-1.800 -.8,-1.800 -2,-.6 v-3 l2,-.6 .8,-1.800 -1,-1.800 2.200,-2.200 1.800,1 1.800,-.8z" fill="#dedede" stroke="#8a8a8a" stroke-width=".8"/><circle r="3" fill="#9a9a9a"/></g>
<!-- hp -->
<circle cx="921.4" cy="844.1" r="10" fill="url(#pHp)"/>
<text x="921.2" y="848.6" font-family="Liberation Sans, sans-serif" font-size="13" font-style="italic" font-weight="bold" fill="#fff" text-anchor="middle" letter-spacing="-.6">hp</text>
<!-- scissors -->
<g fill="none" stroke="#eef2f4" stroke-width="1.7" stroke-linecap="round"><path d="M943.6,838.4 L952,849.4 M953.4,838.4 L945,849.4"/><circle cx="944.2" cy="851" r="2.2"/><circle cx="952.800" cy="851" r="2.2"/></g>
<!-- volume -->
<path d="M964,842.4 h3.400 l4.600,-4 v14.400 l-4.600,-4 h-3.400z" fill="#f0f4f6"/>
<g fill="none" stroke="#f0f4f6" stroke-linecap="round"><path d="M974.4,842 a4.600,4.600 0 0 1 0,7" stroke-width="1.500"/><path d="M977,839.600 a8,8 0 0 1 0,11.800" stroke-width="1.500"/><path d="M980,837.400 a11,11 0 0 1 0,16.200" stroke-width="1" opacity=".4"/></g>
<!-- network -->
<rect x="990.6" y="837.2" width="16.2" height="15.4" rx="1.400" fill="#eef0f0" stroke="#c6cccc" stroke-width=".5"/>
<path d="M993,851 v-8.400 h1.600 v-1.800 h2 v-1.600 h4.200 v1.600 h2 v1.800 h1.600 v8.400z" fill="#1c1c1c"/>
<rect x="996" y="845" width="5.400" height="6" fill="#e6e6e6"/><rect x="997.6" y="850" width="2.200" height="4" fill="#f2f2f2"/>
<path d="M994.600,843 v2.400 M996.400,843 v2.400 M998.200,843 v2.400 M1000,843 v2.400 M1001.800,843 v2.400" stroke="#888" stroke-width=".6"/>
<path d="M1018,846.600 l3.800,-4.600 3.800,4.600z" fill="#eef2f4"/>
<!-- clock -->
<text x="1071.200" y="855.200" font-family="Liberation Sans, sans-serif" font-size="30.500" fill="#e2e8ea" text-anchor="middle" textLength="70" lengthAdjust="spacingAndGlyphs">18:23</text>
<!-- trash -->
<path d="M1121.400,832.600 c2,-2.600 5,-2.600 6.400,-.8 c2,-2.400 5.600,-2 6.600,0 c1.800,-1.600 4,-1 4.400,.8 v2 h-17.400z" fill="#f4c628"/><circle cx="1123.600" cy="832" r="2.100" fill="#7cb8ee"/><circle cx="1135" cy="831.600" r="2.300" fill="#7cb8ee"/><circle cx="1127.800" cy="831" r="2.300" fill="#f6c420"/>
<path d="M1119,834.600 h21.400 l-2.200,21.600 a2,1.400 0 0 1 -2,1.200 h-13 a2,1.400 0 0 1 -2,-1.200z" fill="#64809e" fill-opacity=".8" stroke="#aab4bc" stroke-width=".5"/>
<path d="M1121,836 l2,20 M1124,836 l1.400,20 M1127,836 l.6,20 M1130,836 l-.2,20 M1133,836 l-1,20 M1136,836 l-1.600,20 M1139,836 l-2.200,20 M1119.600,839 h20.400 M1120,842 h19.600 M1120.400,845 h19 M1120.600,848 h18.400 M1121,851 h17.600 M1121.600,854 h16.400" stroke="#dfe6ea" stroke-width=".5" opacity=".5"/>
<path d="M1127,837 l1.200,5 -.8,3" stroke="#f4cc3a" stroke-width="1.800" fill="none" opacity=".9"/>
<circle cx="1124.600" cy="852.400" r="2.200" fill="#7cb8ee"/><path d="M1126,853.400 l4,-1.600 1,2.400 -3.600,1.200z" fill="#f4cc3a"/>
<path d="M1120.800,855 h17.600 l-.3,2 a2,1.400 0 0 1 -2,1.100 h-13 a2,1.400 0 0 1 -2,-1.100z" fill="#cdd4da"/>
<path d="M1118,832.400 h23.400 l-.4,3.400 h-22.600z" fill="#dfe4e8" stroke="#98a2a8" stroke-width=".4" opacity=".92"/>
<!-- right cashew -->
<circle cx="1175" cy="846" r="23" fill="#1c262e" opacity=".22"/><circle cx="1175" cy="846" r="22.500" fill="none" stroke="#c4d0d6" stroke-width=".9" opacity=".5"/>
<path d="M1156.500,840.400 h14 M1156.500,844.300 h14 M1156.500,848.200 h14" stroke="#b8c4ca" stroke-width="2" opacity=".75"/>
</svg>
<svg id="cashew" width="40" height="40" viewBox="1130 0 40 40" style="position:absolute;left:1130px;top:0">
<circle cx="1170" cy="0" r="28.800" fill="#2c6486" opacity=".62"/>
<path d="M1146,14 A28.800,28.800 0 0 0 1160,27" stroke="#cfe4f0" stroke-width=".8" fill="none" opacity=".8"/>
<path d="M1154.400,5.400 l1.400,-1.400 h9.800 l1.400,1.400z" fill="#7a9cb2"/>
<rect x="1152.800" y="5.400" width="14.200" height="2.800" fill="#8fb6ce"/><rect x="1152.800" y="9.600" width="14.200" height="2" fill="#8fb6ce"/><rect x="1152.800" y="12.800" width="14.200" height="2.800" fill="#8fb6ce"/>
<rect x="1152.800" y="8.200" width="14.200" height="1.400" fill="#6c92aa"/><rect x="1152.800" y="11.600" width="14.200" height="1.200" fill="#6c92aa"/>
</svg>
<svg id="omlogo" width="250" height="44" viewBox="840 738 250 44" style="position:absolute;left:840px;top:738px">
<path d="M866.500,744 A16.400,16.400 0 1 0 877,772.400 A14.200,14.200 0 0 1 866.500,744Z" fill="#f4f6f8"/>
<ellipse cx="868.600" cy="760.200" rx="12.600" ry="12.400" fill="none" stroke="#f4f6f8" stroke-width="1.100" opacity=".85"/>
<g font-family="Liberation Sans, sans-serif" fill="#f4f6f8">
<text x="857.400" y="771.200" font-size="30.500" textLength="26" lengthAdjust="spacingAndGlyphs">O</text>
<text x="884.500" y="768.100" font-size="16.300" textLength="48.500" lengthAdjust="spacingAndGlyphs">PEN</text>
<text x="934.500" y="768.100" font-size="26" textLength="33.500" lengthAdjust="spacingAndGlyphs">M</text>
<text x="968.500" y="768.100" font-size="16.300" textLength="113" lengthAdjust="spacingAndGlyphs">ANDRIVA</text>
</g>
</svg>
</body></html>
